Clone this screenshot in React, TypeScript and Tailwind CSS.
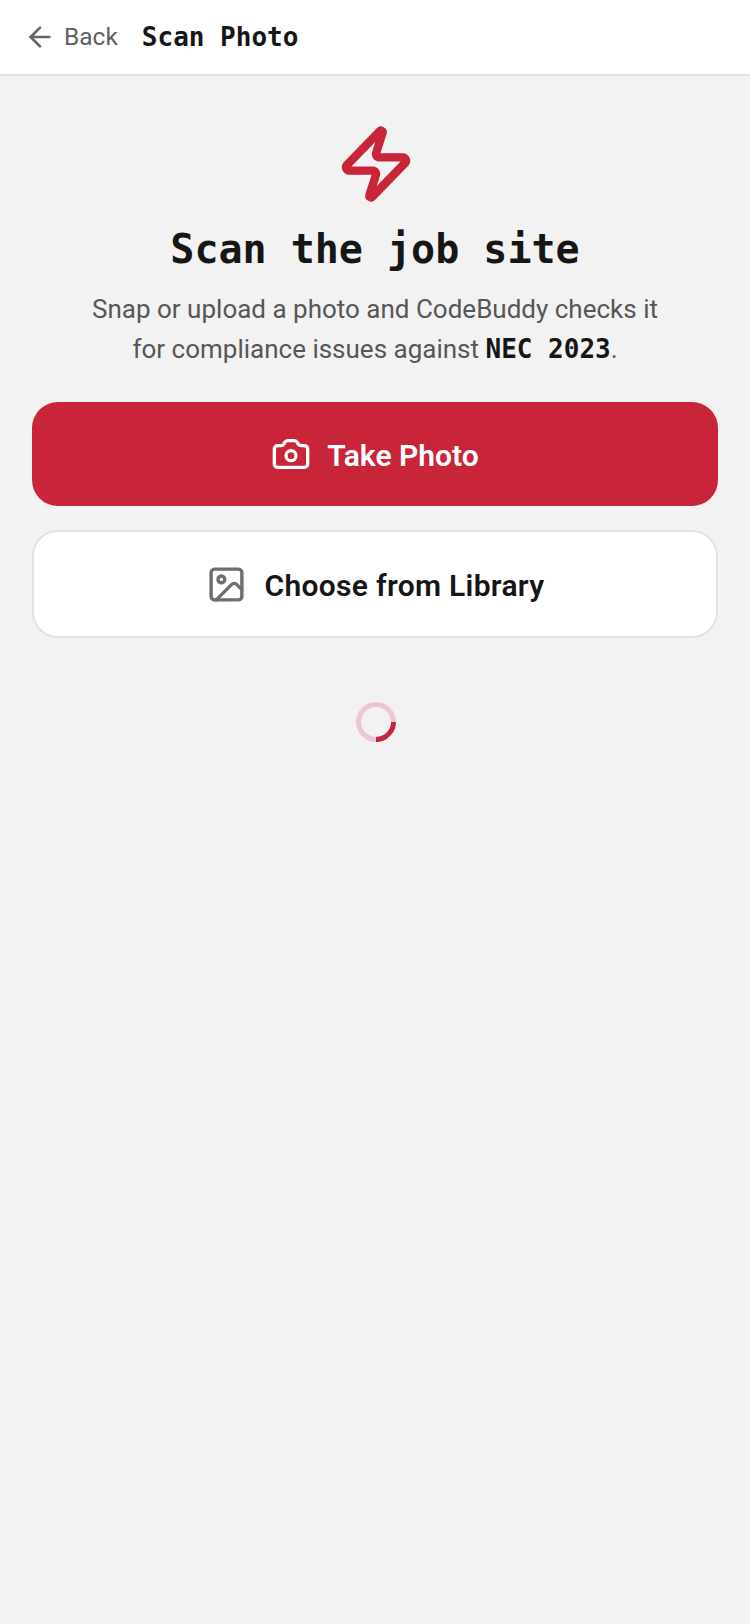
import { ArrowLeft, Camera, Image, Zap } from "lucide-react";

const sans = "font-['Roboto','Noto_Sans',sans-serif]";
const mono = "font-['DejaVu_Sans_Mono',monospace]";

export default function App() {
	return (
		<div className={`flex min-h-[1624px] w-[750px] flex-col bg-[#f2f2f2] ${sans}`}>
			{/* header */}
			<header className="flex h-[76px] items-center border-b-2 border-[#e2e2e2] bg-white pl-[24px]">
				<ArrowLeft className="h-[32px] w-[32px] text-[#666666]" strokeWidth={2} />
				<span className="mt-[1px] ml-[8px] text-[24.5px] text-[#5f5f5f]">Back</span>
				<h1 className={`mt-[1px] ml-[24px] text-[26px] font-bold text-[#161616] ${mono}`}>Scan Photo</h1>
			</header>

			<main className="flex flex-col items-center px-[32px] pt-[48px]">
				<Zap className="ml-[2px] h-[80px] w-[80px] text-[#c8253b]" strokeWidth={2.5} />
				<h2 className={`mt-[19px] text-[40px] leading-[52px] font-bold text-[#161616] ${mono}`}>Scan the job site</h2>
				<p className="mt-[14px] text-center text-[26px] leading-[40px] text-[#565656]">
					Snap or upload a photo and CodeBuddy checks it
					<br />
					for compliance issues against{" "}
					<span className={`font-bold text-[#161616] ${mono}`}>NEC 2023</span>.
				</p>

				{/* actions */}
				<button className="mt-[33px] flex h-[104px] w-full items-center justify-center gap-[16px] rounded-[26px] bg-[#c8253b] text-[30px] font-semibold text-white">
					<Camera className="h-[40px] w-[40px]" strokeWidth={2} />
					<span className="mt-[3px]">Take Photo</span>
				</button>
				<button className="mt-[24px] flex h-[108px] w-full items-center justify-center gap-[18px] rounded-[26px] border-2 border-[#e2e2e2] bg-white text-[30px] font-semibold tracking-[0.3px] text-[#161616]">
					<Image className="h-[41px] w-[41px] text-[#6e6e6e]" strokeWidth={2} />
					<span className="mt-[3px]">Choose from Library</span>
				</button>

				{/* spinner */}
				<div className="mt-[64px] ml-[1px] h-[40px] w-[40px] rotate-45 rounded-full border-[5px] border-[#ecc8ce] border-r-[#c8253b]" />
			</main>
		</div>
	);
}
